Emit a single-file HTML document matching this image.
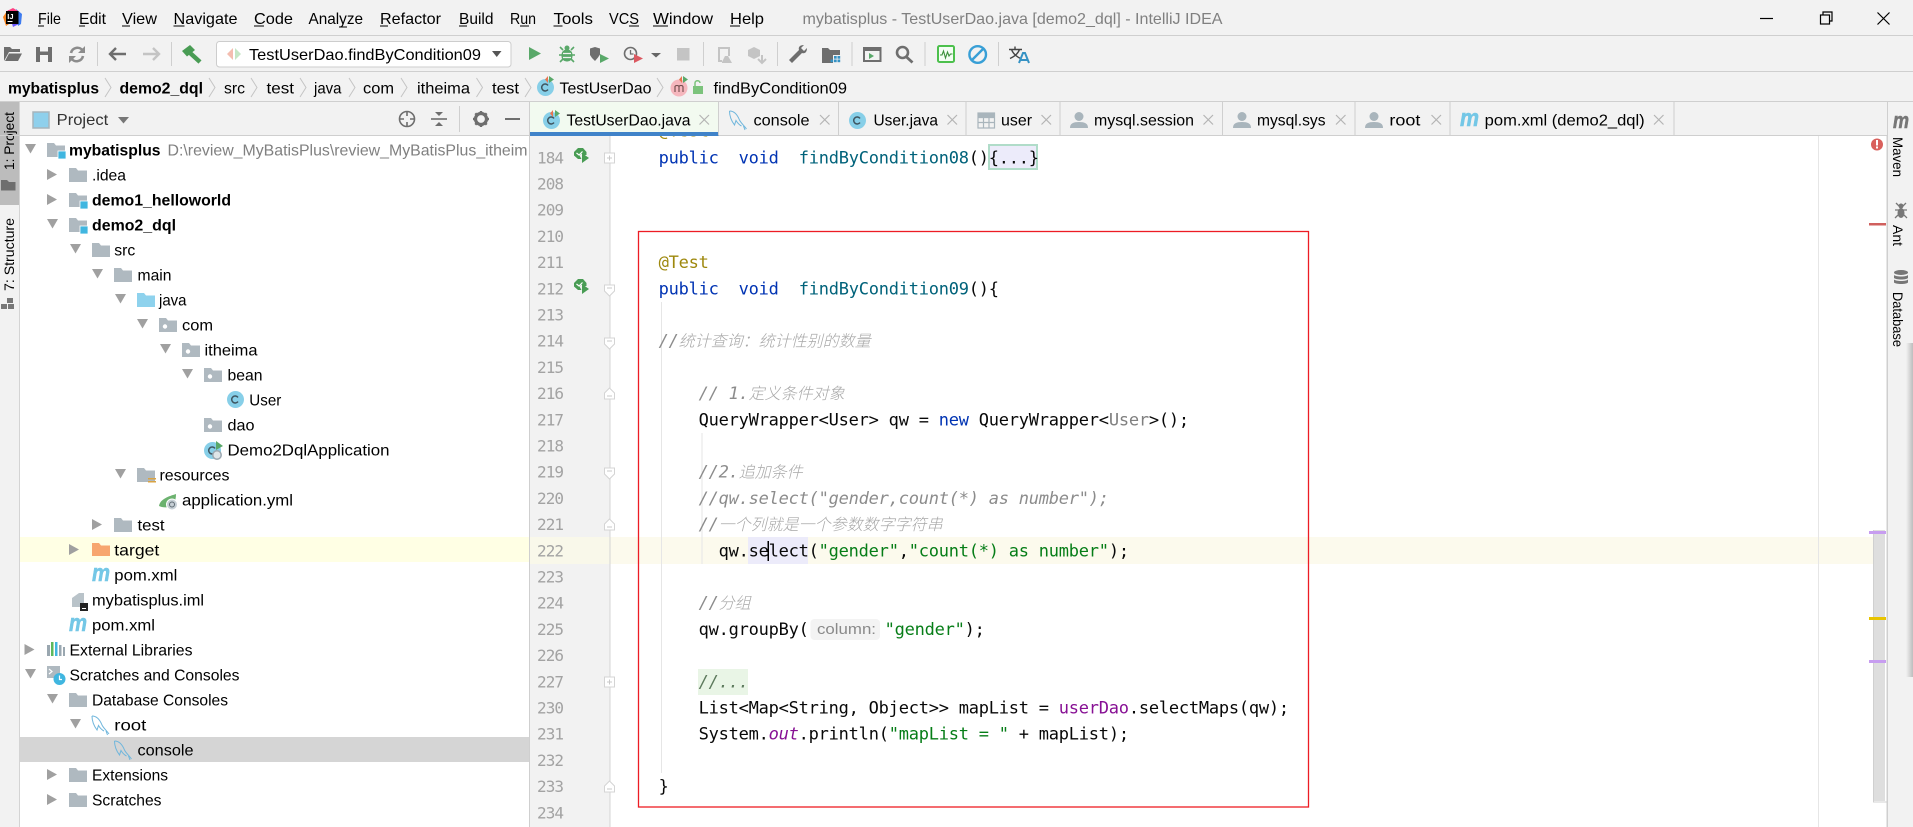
<!DOCTYPE html>
<html lang="en"><head><meta charset="utf-8"><title>mybatisplus - TestUserDao.java [demo2_dql] - IntelliJ IDEA</title>
<style>
html,body{margin:0;padding:0;background:#f2f2f2;overflow:hidden}
svg{display:block}
text{font-family:"Liberation Sans","Noto Sans CJK SC",sans-serif;font-size:16px;fill:#000;white-space:pre}
.b{font-weight:bold}
.g{fill:#808080}
.n{font-family:"DejaVu Sans Mono","Liberation Mono",monospace;font-size:16px;fill:#a3a3a3;letter-spacing:-.93px}
.m{font-family:"DejaVu Sans Mono","Liberation Mono","Noto Sans CJK SC",monospace;font-size:17px;fill:#080808;letter-spacing:-.23px}
.k{fill:#0033b3}.f{fill:#00627a}.a{fill:#9e880d}.s{fill:#067d17}.p{fill:#871094}.u{fill:#808080}
.c{fill:#8c8c8c;font-style:italic}
.z{font-family:"Noto Sans CJK SC","WenQuanYi Zen Hei",sans-serif;font-size:16px;letter-spacing:0;fill:#a8a8a8;font-weight:300}
.mv{font-weight:bold;font-size:24px;font-style:italic;fill:#74c7e6;stroke:#74c7e6;stroke-width:.6px}
</style></head><body>
<svg xmlns="http://www.w3.org/2000/svg" width="1913" height="827" viewBox="0 0 1913 827">
<defs>
<path id="fo" d="M0 0h7l2 2.5h9V14H0z" fill="#afb9c0"/>
<g id="pk"><path d="M0 0h7l2 2.5h9V14H0z" fill="#afb9c0"/><circle cx="6" cy="8.5" r="2.2" fill="#fff"/></g>
<g id="md"><path d="M0 0h7l2 2.5h9V14H0z" fill="#afb9c0"/><rect x="11" y="8" width="8" height="8" fill="#40b6e0" stroke="#fff" stroke-width=".8"/></g>
<path id="ao" d="M0 0h11L5.5 9.5z" fill="#a0a0a0"/>
<path id="ac" d="M0 0l10 5.5L0 11z" fill="#a0a0a0"/>
<g id="cl"><circle cx="8.5" cy="8.5" r="8.5" fill="#87cfe8"/><path d="M11 6.4A3.5 3.5 0 1 0 11 10.6" fill="none" stroke="#3f5560" stroke-width="1.5"/></g>
<path id="x" d="M0 0l9.5 9.5M9.5 0L0 9.5" fill="none" stroke="#b4b4b4" stroke-width="1.2"/>
<g id="pe"><circle cx="9" cy="4.5" r="4.5" fill="#a9b5bc"/><path d="M0 16c0-4.5 3-6 9-6s9 1.500 9 6z" fill="#a9b5bc"/></g>
<path id="ch" d="M-3 -9.500L3 0L-3 9.500" fill="none" stroke="#c4c4c4" stroke-width="1"/>
<g id="fd" stroke="#d4d4d4" fill="#fff" stroke-width="1"><path d="M-5 -5h10v6l-5 5l-5-5z"/><path d="M-2.500 -2h5" stroke="#c9c9c9"/></g>
<g id="fu" stroke="#d4d4d4" fill="#fff" stroke-width="1"><path d="M-5 5h10v-6l-5-5l-5 5z"/><path d="M-2.500 2h5" stroke="#c9c9c9"/></g>
<g id="fp" stroke="#d4d4d4" fill="#fff" stroke-width="1"><rect x="-5" y="-5" width="10" height="10"/><path d="M-2.500 0h5M0 -2.500v5" stroke="#c9c9c9"/></g>
<g id="rn"><path d="M0 4L4 0h5l3.500 4v3H9L7.500 5.500 5.500 7.500 7.500 11H4L0 7.500z" fill="#499c54"/><path d="M8 5l7 5-7 5z" fill="#499c54"/><path d="M2.500 5l2.500 2 3.500-3.500" stroke="#fff" fill="none" stroke-width="1.200"/></g>
<g id="dl" fill="none" stroke="#6fb6dc" stroke-width="1"><path d="M0 0C5 0 8 4 10 9C11.500 12 14 14 17 18"/><path d="M0 0C0 5 2 10 5 14L6.500 9.500C8 12 10 14 12 15"/><path d="M14 15l1.500 4"/></g>
<linearGradient id="sh" x1="0" x2="1" y1="0" y2="0"><stop offset="0" stop-color="#f2f2f2"/><stop offset="1" stop-color="#bdbdbd"/></linearGradient>
</defs>

<rect width="1913" height="827" fill="#f2f2f2"/>

<!-- editor -->
<rect x="530" y="136" width="1358" height="691" fill="#fff"/>
<rect x="530" y="136" width="80" height="691" fill="#f2f2f2"/>
<rect x="530" y="537" width="80" height="27" fill="#f9f8ea"/>
<rect x="610" y="537" width="1264" height="27" fill="#fcfaed"/>
<rect x="609.500" y="136" width="1" height="691" fill="#d4d4d4"/>
<rect x="1818" y="136" width="1" height="691" fill="#e6e6e6"/>
<rect x="661" y="302" width="1" height="471" fill="#e6e6e6"/>
<rect x="701.500" y="433" width="1" height="131" fill="#e6e6e6"/>

<rect x="989" y="145" width="48" height="24" fill="#ecebfa" stroke="#b0dcc9" stroke-width="2"/>
<rect x="748" y="537" width="60" height="27" fill="#ecebfa"/>
<rect x="698" y="669" width="50" height="26" fill="#e9f5e6"/>
<rect x="810.500" y="619" width="69.500" height="21" rx="4" fill="#f3f3f3"/>

<!-- line numbers -->
<text class="n" x="537" y="163.300">184</text><text class="n" x="537" y="189.500">208</text><text class="n" x="537" y="215.700">209</text><text class="n" x="537" y="241.900">210</text><text class="n" x="537" y="268.100">211</text><text class="n" x="537" y="294.300">212</text><text class="n" x="537" y="320.500">213</text><text class="n" x="537" y="346.700">214</text><text class="n" x="537" y="372.900">215</text><text class="n" x="537" y="399.100">216</text><text class="n" x="537" y="425.300">217</text><text class="n" x="537" y="451.500">218</text><text class="n" x="537" y="477.700">219</text><text class="n" x="537" y="503.900">220</text><text class="n" x="537" y="530.100">221</text><text class="n" x="537" y="556.300">222</text><text class="n" x="537" y="582.500">223</text><text class="n" x="537" y="608.700">224</text><text class="n" x="537" y="634.900">225</text><text class="n" x="537" y="661.100">226</text><text class="n" x="537" y="687.300">227</text><text class="n" x="537" y="713.500">230</text><text class="n" x="537" y="739.700">231</text><text class="n" x="537" y="765.900">232</text><text class="n" x="537" y="792.100">233</text><text class="n" x="537" y="818.300">234</text>

<!-- gutter icons -->
<use href="#rn" x="574" y="148"/><use href="#rn" x="574" y="279"/>
<use href="#fp" x="609.500" y="158"/><use href="#fd" x="609.500" y="290"/><use href="#fd" x="609.500" y="343"/><use href="#fu" x="609.500" y="394"/><use href="#fd" x="609.500" y="473"/><use href="#fu" x="609.500" y="525"/><use href="#fp" x="609.500" y="682"/><use href="#fu" x="609.500" y="787"/>

<!-- code -->
<text class="m a" x="658.600" y="136.500">@Test</text>
<text class="m" x="658.600" y="163.300"><tspan class="k">public</tspan>  <tspan class="k">void</tspan>  <tspan class="f">findByCondition08</tspan>(){...}</text>
<text class="m a" x="658.600" y="268.100">@Test</text>
<text class="m" x="658.600" y="294.300"><tspan class="k">public</tspan>  <tspan class="k">void</tspan>  <tspan class="f">findByCondition09</tspan>(){</text>
<text class="m c" x="658.600" y="346.700">//<tspan class="z">统计查询：统计性别的数量</tspan></text>
<text class="m c" x="698.600" y="399.100">// 1.<tspan class="z">定义条件对象</tspan></text>
<text class="m" x="698.600" y="425.300">QueryWrapper&lt;User&gt; qw = <tspan class="k">new</tspan> QueryWrapper&lt;<tspan class="u">User</tspan>&gt;();</text>
<text class="m c" x="698.600" y="477.700">//2.<tspan class="z">追加条件</tspan></text>
<text class="m c" x="698.600" y="503.900">//qw.select("gender,count(*) as number");</text>
<text class="m c" x="698.600" y="530.100">//<tspan class="z">一个列就是一个参数数字字符串</tspan></text>
<text class="m" x="718.600" y="556.300">qw.select(<tspan class="s">"gender"</tspan>,<tspan class="s">"count(*) as number"</tspan>);</text>
<rect x="767.500" y="541" width="1.500" height="20" fill="#000"/>
<text class="m c" x="698.600" y="608.700">//<tspan class="z">分组</tspan></text>
<text class="m" x="698.600" y="634.900">qw.groupBy(</text>
<text x="817" y="634" style="font-size:14.500px;fill:#8a8a8a" textLength="59" lengthAdjust="spacingAndGlyphs">column:</text>
<text class="m" x="884.600" y="634.900"><tspan class="s">"gender"</tspan>);</text>
<text class="m c" x="698.600" y="687.300" style="fill:#5d7a5d">//...</text>
<text class="m" x="698.600" y="713.500">List&lt;Map&lt;String, Object&gt;&gt; mapList = <tspan class="p">userDao</tspan>.selectMaps(qw);</text>
<text class="m" x="698.600" y="739.700">System.<tspan class="p" font-style="italic">out</tspan>.println(<tspan class="s">"mapList = "</tspan> + mapList);</text>
<text class="m" x="658.600" y="792.100">}</text>

<!-- red annotation -->
<rect x="638.500" y="231.500" width="670" height="575.500" fill="none" stroke="#ed1c24" stroke-width="1.300"/>

<!-- scrollbar & markers -->
<rect x="1874" y="530" width="11" height="271" fill="#dedede"/>
<path d="M1873.500 530V802H1886.500" fill="none" stroke="#d0d0d0" stroke-width="1"/>
<rect x="1869" y="531" width="17" height="3" fill="#c79df0"/>
<rect x="1869" y="223" width="17" height="2.500" fill="#d0605e"/>
<rect x="1869" y="617" width="17" height="3" fill="#e8c400"/>
<rect x="1869" y="660" width="17" height="3" fill="#c79df0"/>
<circle cx="1877" cy="144.500" r="6" fill="#d9605c"/><rect x="1876" y="140" width="2" height="5.500" fill="#fff"/><rect x="1876" y="146.500" width="2" height="2" fill="#fff"/>

<!-- project tree panel -->
<rect x="20" y="136" width="509" height="691" fill="#fff"/>
<rect x="529" y="102" width="1" height="725" fill="#cfcfcf"/>
<rect x="19" y="102" width="1" height="725" fill="#d4d4d4"/>
<rect x="20" y="537" width="509" height="25" fill="#ffffe4"/>
<rect x="20" y="737" width="509" height="25" fill="#d5d5d5"/>

<!-- header of project -->
<rect x="20" y="102" width="509" height="33" fill="#f2f2f2"/>
<rect x="33" y="112" width="16" height="16" fill="#8fd0ec" stroke="#a7b4bb" stroke-width="1.500"/>
<text x="56.700" y="125" textLength="51.500" lengthAdjust="spacingAndGlyphs" style="fill:#333">Project</text>
<path d="M118 117h11l-5.500 6.500z" fill="#777"/>
<g fill="none" stroke="#6e6e6e"><circle cx="407" cy="119" r="7.500" stroke-width="1.600"/><path d="M407 111v5M407 122v5M399 119h5M410 119h5" stroke-width="1.600"/></g>
<path d="M431 119h16" stroke="#6e6e6e" stroke-width="1.600"/><path d="M435 112h8l-4 4zM435 126h8l-4-4z" fill="#6e6e6e"/>
<rect x="459" y="106" width="1" height="26" fill="#cfcfcf"/>
<circle cx="481" cy="119" r="5.500" fill="none" stroke="#6e6e6e" stroke-width="3.200"/><path d="M481 111v3M481 124v3M473 119h3M486 119h3M475.300 113.300l2 2M484.700 122.700l2 2M475.300 124.700l2-2M484.700 115.300l2-2" stroke="#6e6e6e" stroke-width="2.400"/>
<rect x="505" y="118" width="15" height="2" fill="#6e6e6e"/>

<!-- tree rows -->
<use href="#ao" x="25" y="144"/><use href="#md" x="47" y="143"/><text class="b" x="69" y="155.500" textLength="91.500" lengthAdjust="spacingAndGlyphs">mybatisplus</text><text class="g" x="167.500" y="155.500" textLength="360" lengthAdjust="spacingAndGlyphs">D:\review_MyBatisPlus\review_MyBatisPlus_itheim</text>
<use href="#ac" x="47" y="169"/><use href="#fo" x="69" y="168"/><text x="92" y="180.500" textLength="34" lengthAdjust="spacingAndGlyphs">.idea</text>
<use href="#ac" x="47" y="194"/><use href="#md" x="69" y="193"/><text class="b" x="92" y="205.500" textLength="139" lengthAdjust="spacingAndGlyphs">demo1_helloworld</text>
<use href="#ao" x="47" y="219"/><use href="#md" x="69" y="218"/><text class="b" x="92" y="230.500" textLength="84" lengthAdjust="spacingAndGlyphs">demo2_dql</text>
<use href="#ao" x="70" y="244"/><use href="#fo" x="92" y="243"/><text x="114.300" y="255.500" textLength="21" lengthAdjust="spacingAndGlyphs">src</text>
<use href="#ao" x="92" y="269"/><use href="#fo" x="114" y="268"/><text x="137.500" y="280.500" textLength="34" lengthAdjust="spacingAndGlyphs">main</text>
<use href="#ao" x="115" y="294"/><path d="M137 293h7l2 2.500h9V307H137z" fill="#8ed2ed"/><text x="159" y="305.500" textLength="27.500" lengthAdjust="spacingAndGlyphs">java</text>
<use href="#ao" x="137" y="319"/><use href="#pk" x="159" y="318"/><text x="182" y="330.500" textLength="31" lengthAdjust="spacingAndGlyphs">com</text>
<use href="#ao" x="160" y="344"/><use href="#pk" x="182" y="343"/><text x="204.500" y="355.500" textLength="53" lengthAdjust="spacingAndGlyphs">itheima</text>
<use href="#ao" x="182" y="369"/><use href="#pk" x="204" y="368"/><text x="227.500" y="380.500" textLength="35" lengthAdjust="spacingAndGlyphs">bean</text>
<use href="#cl" x="227" y="391"/><text x="249.300" y="405.500" textLength="32" lengthAdjust="spacingAndGlyphs">User</text>
<use href="#pk" x="204" y="418"/><text x="227.500" y="430.500" textLength="27" lengthAdjust="spacingAndGlyphs">dao</text>
<use href="#cl" x="204" y="442"/><path d="M216 441l7 5-7 4z" fill="#59a869"/><circle cx="217" cy="455" r="4.200" fill="#dfe5e8" stroke="#9aa7b0" stroke-width="1.500"/><text x="227.500" y="455.500" textLength="162" lengthAdjust="spacingAndGlyphs">Demo2DqlApplication</text>
<use href="#ao" x="115" y="469"/><use href="#fo" x="137" y="468"/><rect x="148" y="478" width="8" height="1.500" fill="#d9a343"/><rect x="148" y="481" width="8" height="1.500" fill="#d9a343"/><text x="159.500" y="480.500" textLength="70" lengthAdjust="spacingAndGlyphs">resources</text>
<path d="M159 506c1-6 7-9 17-12c0 8-3 12-7 13c-4 1-8 0-10-1z" fill="#6cb26f"/><circle cx="172" cy="504.500" r="5.500" fill="#c7d0d6" stroke="#fff" stroke-width="1"/><circle cx="172" cy="504.500" r="2.500" fill="none" stroke="#5f6b73" stroke-width="1"/><text x="182" y="505.500" textLength="111" lengthAdjust="spacingAndGlyphs">application.yml</text>
<use href="#ac" x="92" y="519"/><use href="#fo" x="114" y="518"/><text x="137.500" y="530.500" textLength="27" lengthAdjust="spacingAndGlyphs">test</text>
<use href="#ac" x="69" y="544"/><path d="M92 543h7l2 2.500h9V556H92z" fill="#f7a66f"/><text x="114.300" y="555.500" textLength="45" lengthAdjust="spacingAndGlyphs">target</text>
<text class="mv" x="92" y="581" textLength="18" lengthAdjust="spacingAndGlyphs">m</text><text x="114.300" y="580.500" textLength="63" lengthAdjust="spacingAndGlyphs">pom.xml</text>
<path d="M72 598l7-5h5v14h-12z" fill="#b9c3c9"/><rect x="80" y="603" width="8" height="8" fill="#222"/><rect x="82" y="608" width="4" height="1" fill="#fff"/><text x="92" y="605.500" textLength="112" lengthAdjust="spacingAndGlyphs">mybatisplus.iml</text>
<text class="mv" x="69" y="631" textLength="18" lengthAdjust="spacingAndGlyphs">m</text><text x="92" y="630.500" textLength="63" lengthAdjust="spacingAndGlyphs">pom.xml</text>
<use href="#ac" x="24.500" y="644"/><g><rect x="47" y="645" width="3" height="11" fill="#9aa7b0"/><rect x="51" y="642" width="2.500" height="14" fill="#5db85d"/><rect x="55" y="642" width="2.500" height="14" fill="#40b6e0"/><rect x="59" y="645" width="2.500" height="11" fill="#9aa7b0"/><rect x="63" y="647" width="2" height="9" fill="#9aa7b0"/></g><text x="69.500" y="655.500" textLength="123" lengthAdjust="spacingAndGlyphs">External Libraries</text>
<use href="#ao" x="25" y="669"/><rect x="47" y="666" width="13" height="12" fill="#afb9c0"/><path d="M49 669l3 2.500-3 2.500" fill="none" stroke="#fff" stroke-width="1.200"/><circle cx="59.500" cy="679" r="6" fill="#40b6e0"/><path d="M59.500 675.500v4h2.500" fill="none" stroke="#fff" stroke-width="1.200"/><text x="69.500" y="680.500" textLength="170" lengthAdjust="spacingAndGlyphs">Scratches and Consoles</text>
<use href="#ao" x="47" y="694"/><use href="#fo" x="69" y="693"/><text x="92" y="705.500" textLength="136" lengthAdjust="spacingAndGlyphs">Database Consoles</text>
<use href="#ao" x="70" y="719"/><use href="#dl" x="92" y="716"/><text x="114.300" y="730.500" textLength="32" lengthAdjust="spacingAndGlyphs">root</text>
<use href="#dl" x="114.500" y="741"/><text x="137.500" y="755.500" textLength="56" lengthAdjust="spacingAndGlyphs">console</text>
<use href="#ac" x="47" y="769"/><use href="#fo" x="69" y="768"/><text x="92" y="780.500" textLength="76" lengthAdjust="spacingAndGlyphs">Extensions</text>
<use href="#ac" x="47" y="794"/><use href="#fo" x="69" y="793"/><text x="92" y="805.500" textLength="69.500" lengthAdjust="spacingAndGlyphs">Scratches</text>

<!-- left stripe -->
<rect x="0" y="102" width="19" height="103" fill="#bcbcbc"/>
<text transform="translate(14 170) rotate(-90)" style="font-size:14px" textLength="58" lengthAdjust="spacingAndGlyphs">1: Project</text>
<path d="M1 180h6l2 2h6.500v8.500H1z" fill="#6e6e6e"/>
<text transform="translate(14 291) rotate(-90)" style="font-size:14px" textLength="73" lengthAdjust="spacingAndGlyphs">7: Structure</text>
<path d="M7 298h6v5H7zM1 304h6v5H1zM8 304h6v5H8z" fill="#777"/>

<!-- tab bar -->
<rect x="530" y="102" width="1358" height="33" fill="#f2f2f2"/>
<rect x="530" y="102" width="188.500" height="30" fill="#f2faf0"/>
<rect x="0" y="135" width="1888" height="1" fill="#cfcfcf"/>
<rect x="530" y="132" width="188.500" height="4" fill="#4083c9"/>
<g fill="#cfcfcf"><rect x="718" y="102" width="1" height="33"/><rect x="838" y="102" width="1" height="33"/><rect x="965.500" y="102" width="1" height="33"/><rect x="1059.500" y="102" width="1" height="33"/><rect x="1222" y="102" width="1" height="33"/><rect x="1354.500" y="102" width="1" height="33"/><rect x="1449.500" y="102" width="1" height="33"/><rect x="1673.500" y="102" width="1" height="33"/></g>
<use href="#cl" x="543" y="112"/><path d="M555 110l5 3.500-5 3.500z" fill="#59a869"/><path d="M553 110l-3 3.500 3 3.500z" fill="#e8744f"/>
<text x="566.500" y="125.500" textLength="124" lengthAdjust="spacingAndGlyphs">TestUserDao.java</text><use href="#x" x="699.500" y="115"/>
<use href="#dl" x="729.500" y="111"/><text x="753.500" y="125.500" textLength="56" lengthAdjust="spacingAndGlyphs">console</text><use href="#x" x="820" y="115"/>
<use href="#cl" x="849" y="112"/><text x="873.500" y="125.500" textLength="64.500" lengthAdjust="spacingAndGlyphs">User.java</text><use href="#x" x="947.500" y="115"/>
<g fill="none" stroke="#a9b5bc" stroke-width="1.200"><rect x="978" y="113" width="16.500" height="15"/><path d="M978 117.500h16.500M978 122.500h16.500M983.500 113v15M989 113v15"/></g><rect x="978" y="113" width="16.500" height="4" fill="#a9b5bc"/>
<text x="1001" y="125.500" textLength="31" lengthAdjust="spacingAndGlyphs">user</text><use href="#x" x="1041.500" y="115"/>
<use href="#pe" x="1070" y="112"/><text x="1094" y="125.500" textLength="100" lengthAdjust="spacingAndGlyphs">mysql.session</text><use href="#x" x="1203.500" y="115"/>
<use href="#pe" x="1233" y="112"/><text x="1257" y="125.500" textLength="68.500" lengthAdjust="spacingAndGlyphs">mysql.sys</text><use href="#x" x="1336" y="115"/>
<use href="#pe" x="1365" y="112"/><text x="1389.400" y="125.500" textLength="31" lengthAdjust="spacingAndGlyphs">root</text><use href="#x" x="1431.500" y="115"/>
<text class="mv" x="1460" y="126" textLength="19" lengthAdjust="spacingAndGlyphs">m</text>
<text x="1484.700" y="125.500" textLength="160" lengthAdjust="spacingAndGlyphs">pom.xml (demo2_dql)</text><use href="#x" x="1654" y="115"/>

<!-- right stripe -->
<rect x="1886.500" y="136" width="1.500" height="691" fill="#cfcfcf"/>
<rect x="1888" y="102" width="25" height="725" fill="#f2f2f2"/>
<rect x="1887" y="102" width="1" height="34" fill="#cfcfcf"/>
<text class="mv" x="1893" y="128" textLength="16" lengthAdjust="spacingAndGlyphs" style="font-size:22px;fill:#777;stroke:#777">m</text>
<text transform="translate(1893 137) rotate(90)" style="font-size:14px" textLength="40" lengthAdjust="spacingAndGlyphs">Maven</text>
<g fill="#777"><ellipse cx="1901" cy="206" rx="2.500" ry="2.500"/><ellipse cx="1901" cy="213" rx="3.500" ry="5"/></g><path d="M1896 203l3 3M1906 203l-3 3M1895 210h4M1907 210h-4M1895 218l3-3M1907 218l-3-3" stroke="#777" stroke-width="1.300"/>
<text transform="translate(1893 225) rotate(90)" style="font-size:14px" textLength="21" lengthAdjust="spacingAndGlyphs">Ant</text>
<g fill="#777"><ellipse cx="1901" cy="272.500" rx="7" ry="2.500"/><path d="M1894 275c2 2 12 2 14 0v3c-2 2-12 2-14 0z"/><path d="M1894 279.500c2 2 12 2 14 0v3c-2 2-12 2-14 0z"/></g>
<text transform="translate(1893 292) rotate(90)" style="font-size:14px" textLength="55" lengthAdjust="spacingAndGlyphs">Database</text>
<rect x="1906" y="343" width="7" height="334" fill="url(#sh)"/>

<!-- title bar -->
<rect x="0" y="0" width="1913" height="35" fill="#f2f2f2"/>
<rect x="0" y="35" width="1913" height="1" fill="#cfcfcf"/>
<path d="M3 17l4-6 3 1-1 12-3 2z" fill="#f5821f"/><path d="M8 10h8l3 4v10l-6 3z" fill="#6b57ff"/><path d="M16 9l6 5-1 10-3 2z" fill="#3d7bf0"/><path d="M7 11l6-3 5 3z" fill="#ff3f80"/>
<rect x="6" y="11" width="12.500" height="13" fill="#000"/><text x="7.300" y="19" style="font-size:7.500px;fill:#fff;font-weight:bold">IJ</text><rect x="7.500" y="21" width="5" height="1" fill="#fff"/>
<text x="38" y="24" textLength="23" lengthAdjust="spacingAndGlyphs">File</text><text x="79" y="24" textLength="27" lengthAdjust="spacingAndGlyphs">Edit</text><text x="122" y="24" textLength="35" lengthAdjust="spacingAndGlyphs">View</text><text x="173.500" y="24" textLength="64" lengthAdjust="spacingAndGlyphs">Navigate</text><text x="254" y="24" textLength="39" lengthAdjust="spacingAndGlyphs">Code</text><text x="308.500" y="24" textLength="54.500" lengthAdjust="spacingAndGlyphs">Analyze</text><text x="380" y="24" textLength="61" lengthAdjust="spacingAndGlyphs">Refactor</text><text x="459" y="24" textLength="34.500" lengthAdjust="spacingAndGlyphs">Build</text><text x="510" y="24" textLength="26" lengthAdjust="spacingAndGlyphs">Run</text><text x="553.500" y="24" textLength="39.500" lengthAdjust="spacingAndGlyphs">Tools</text><text x="609" y="24" textLength="30" lengthAdjust="spacingAndGlyphs">VCS</text><text x="653" y="24" textLength="60" lengthAdjust="spacingAndGlyphs">Window</text><text x="730" y="24" textLength="34" lengthAdjust="spacingAndGlyphs">Help</text>
<path d="M38 26h6M79 26h6M122 26h8M173.500 26h11M254 26h10M339 27h8M380 26h8M459 26h8M520 26h9M553.500 26h9M629 26h10M653 26h15M730 26h10" stroke="#000" stroke-width="1"/>
<text class="g" x="802.500" y="24" textLength="420" lengthAdjust="spacingAndGlyphs">mybatisplus - TestUserDao.java [demo2_dql] - IntelliJ IDEA</text>
<path d="M1760 18.500h13" stroke="#000" stroke-width="1.200"/>
<g fill="none" stroke="#000" stroke-width="1.200"><rect x="1820.500" y="15" width="9" height="9"/><path d="M1823 15v-3h9v9h-2.500"/></g>
<path d="M1877.500 12.500l12 12M1889.500 12.500l-12 12" stroke="#000" stroke-width="1.200"/>

<!-- toolbar -->
<rect x="0" y="36" width="1913" height="35" fill="#f2f2f2"/>
<rect x="0" y="71" width="1913" height="1" fill="#cfcfcf"/>
<path d="M4 47h6l2 2h8v3H9l-5 9z" fill="#6e6e6e"/><path d="M9 53.500h13l-4 7.500H5z" fill="#6e6e6e"/>
<rect x="36" y="47" width="16" height="15" fill="#6e6e6e"/><rect x="40" y="47" width="8" height="4.500" fill="#f2f2f2"/><rect x="40" y="55" width="8" height="7" fill="#f2f2f2"/>
<g fill="none" stroke="#8c8c8c" stroke-width="2.600"><path d="M71 53a6.500 6.500 0 0 1 12-2"/><path d="M83 56a6.500 6.500 0 0 1-12 2"/></g><path d="M85 46v7h-7zM69 63v-7h7z" fill="#8c8c8c"/>
<g fill="#cfcfcf"><rect x="97" y="42" width="1" height="24"/><rect x="171" y="42" width="1" height="24"/><rect x="703" y="42" width="1" height="24"/><rect x="777" y="42" width="1" height="24"/><rect x="851.500" y="42" width="1" height="24"/><rect x="924.500" y="42" width="1" height="24"/><rect x="998" y="42" width="1" height="24"/></g>
<path d="M126 54h-15M116 48l-6 6 6 6" fill="none" stroke="#6e6e6e" stroke-width="2.400"/>
<path d="M143 54h15M153 48l6 6-6 6" fill="none" stroke="#c4c4c4" stroke-width="2.400"/>
<path d="M182 51l8-6 5 5-8 6.500z" fill="#499c54"/><path d="M189 52l11 10" stroke="#499c54" stroke-width="4.500"/>
<rect x="216.500" y="41.500" width="294.500" height="25.500" rx="3" fill="#fff" stroke="#cdcdcd"/>
<path d="M233 48l-6 6 6 6z" fill="#f4bdb0"/><path d="M235 48l6 6-6 6z" fill="#c5e6c5"/>
<text x="249" y="60" textLength="232" lengthAdjust="spacingAndGlyphs">TestUserDao.findByCondition09</text>
<path d="M492 51h9.500l-4.750 6z" fill="#555"/>
<path d="M529 47l12 6.500-12 6.500z" fill="#59a869"/>
<g fill="#59a869"><rect x="561.500" y="49.500" width="11" height="12" rx="5"/><circle cx="567" cy="48" r="2.500"/></g><path d="M560 47l3 3M574 47l-3 3M559 55h3M575 55h-3M560 62l3-3M574 62l-3-3" stroke="#59a869" stroke-width="1.600"/><path d="M563 53.500h8M563 57.500h8" stroke="#f2f2f2" stroke-width="1.200"/>
<path d="M590 48.500l5-1.500 5 1.500v6l-2 3-3 3.500-3-3-2-3z" fill="#6e6e6e"/><path d="M600 54l9 4.500-9 4.500z" fill="#59a869"/>
<circle cx="630.500" cy="53.500" r="6" fill="none" stroke="#6e6e6e" stroke-width="1.600"/><path d="M630.500 50v4h3" fill="none" stroke="#6e6e6e" stroke-width="1.300"/><path d="M634 54l9 4.500-9 4.500z" fill="#db5860"/>
<path d="M651 53h10l-5 4.500z" fill="#666"/>
<rect x="677" y="48" width="12.500" height="12.500" fill="#c4c4c4"/>
<path d="M718 47h12v9h-2v-7h-8v11h2v2h-4z" fill="#c4c4c4"/><path d="M722 62l3-6h3l4 7h-10z" fill="#c4c4c4"/>
<path d="M748 50l6-3 6 3v6l-6 3-6-3z" fill="#c4c4c4"/><path d="M762 55v7M758 59l4 4 4-4" stroke="#c4c4c4" stroke-width="2" fill="none"/>
<path d="M789 60l10-10c-1-3 1-5 5-5l-3 3 3 3 3-3c0 4-2 6-5 5l-10 10z" fill="#6e6e6e"/>
<path d="M822 48h6l2 2h10v5h-7v8h-11z" fill="#6e6e6e"/><g fill="#3592c4"><rect x="834" y="56" width="2.700" height="2.700"/><rect x="837.500" y="56" width="2.700" height="2.700"/><rect x="830.500" y="59.500" width="2.700" height="2.700"/><rect x="834" y="59.500" width="2.700" height="2.700"/><rect x="837.500" y="59.500" width="2.700" height="2.700"/></g>
<rect x="864" y="48" width="16.500" height="13" fill="none" stroke="#6e6e6e" stroke-width="2"/><rect x="864" y="48" width="16.500" height="3" fill="#6e6e6e"/><path d="M869 53l5 3-5 3z" fill="#59a869"/>
<circle cx="902.500" cy="52.500" r="5.500" fill="none" stroke="#6e6e6e" stroke-width="2.600"/><path d="M906.500 57l6 5.500" stroke="#6e6e6e" stroke-width="2.800"/>
<rect x="938" y="46" width="16" height="16" rx="1.500" fill="#f4fdf4" stroke="#4cc04c" stroke-width="2"/><path d="M940 55h2l1.500-4 2 7 2-6 1.500 4 1.500-2h2" fill="none" stroke="#3a8f3a" stroke-width="1.100"/>
<circle cx="977.700" cy="54.500" r="8.300" fill="none" stroke="#389fd6" stroke-width="2.400"/><path d="M972 60l11.500-11.500" stroke="#389fd6" stroke-width="2.400"/>
<path d="M1009 49.500h13M1015 46.500v3M1011.500 49.500c1.500 4 5 7 9 9M1019.500 49.500c-1.500 4-5 7-9.500 9" fill="none" stroke="#444" stroke-width="1.400"/>
<path d="M1019 63l4-10h2l4 10M1020.500 60h7" fill="none" stroke="#3592c4" stroke-width="2"/>

<!-- breadcrumb -->
<rect x="0" y="72" width="1913" height="29" fill="#f2f2f2"/>
<rect x="0" y="101" width="1913" height="1" fill="#cfcfcf"/>
<text class="b" x="8" y="93.500" textLength="91" lengthAdjust="spacingAndGlyphs">mybatisplus</text><use href="#ch" x="108" y="87.500"/>
<text class="b" x="119.500" y="93.500" textLength="83.500" lengthAdjust="spacingAndGlyphs">demo2_dql</text><use href="#ch" x="212" y="87.500"/>
<text x="224" y="93.500" textLength="21" lengthAdjust="spacingAndGlyphs">src</text><use href="#ch" x="254" y="87.500"/>
<text x="266.500" y="93.500" textLength="27.500" lengthAdjust="spacingAndGlyphs">test</text><use href="#ch" x="303" y="87.500"/>
<text x="314" y="93.500" textLength="27.500" lengthAdjust="spacingAndGlyphs">java</text><use href="#ch" x="352" y="87.500"/>
<text x="363" y="93.500" textLength="31" lengthAdjust="spacingAndGlyphs">com</text><use href="#ch" x="404" y="87.500"/>
<text x="417" y="93.500" textLength="53" lengthAdjust="spacingAndGlyphs">itheima</text><use href="#ch" x="479.500" y="87.500"/>
<text x="492" y="93.500" textLength="27" lengthAdjust="spacingAndGlyphs">test</text><use href="#ch" x="528" y="87.500"/>
<use href="#cl" x="537" y="79"/><path d="M549 76l5 3.500-5 3.500z" fill="#59a869"/><path d="M548 76l-3 3.500 3 3.500z" fill="#e8744f"/>
<text x="559.500" y="93.500" textLength="92" lengthAdjust="spacingAndGlyphs">TestUserDao</text><use href="#ch" x="660" y="87.500"/>
<circle cx="679" cy="88" r="8.500" fill="#f5b6bd"/><path d="M675 92v-6M675 87c0-2 4-2 4 0v5M679 87c0-2 4-2 4 0v5" fill="none" stroke="#6e4a4a" stroke-width="1.100"/><path d="M683 76l5 3.500-5 3.500z" fill="#59a869"/><path d="M682 76l-3 3.500 3 3.500z" fill="#e8744f"/>
<rect x="693" y="86" width="10" height="8" fill="#7cc37c"/><path d="M695 86v-3c0-3 5-3 5 0" fill="none" stroke="#7cc37c" stroke-width="1.500"/>
<text x="713.500" y="93.500" textLength="133.500" lengthAdjust="spacingAndGlyphs">findByCondition09</text>
</svg>
</body></html>
